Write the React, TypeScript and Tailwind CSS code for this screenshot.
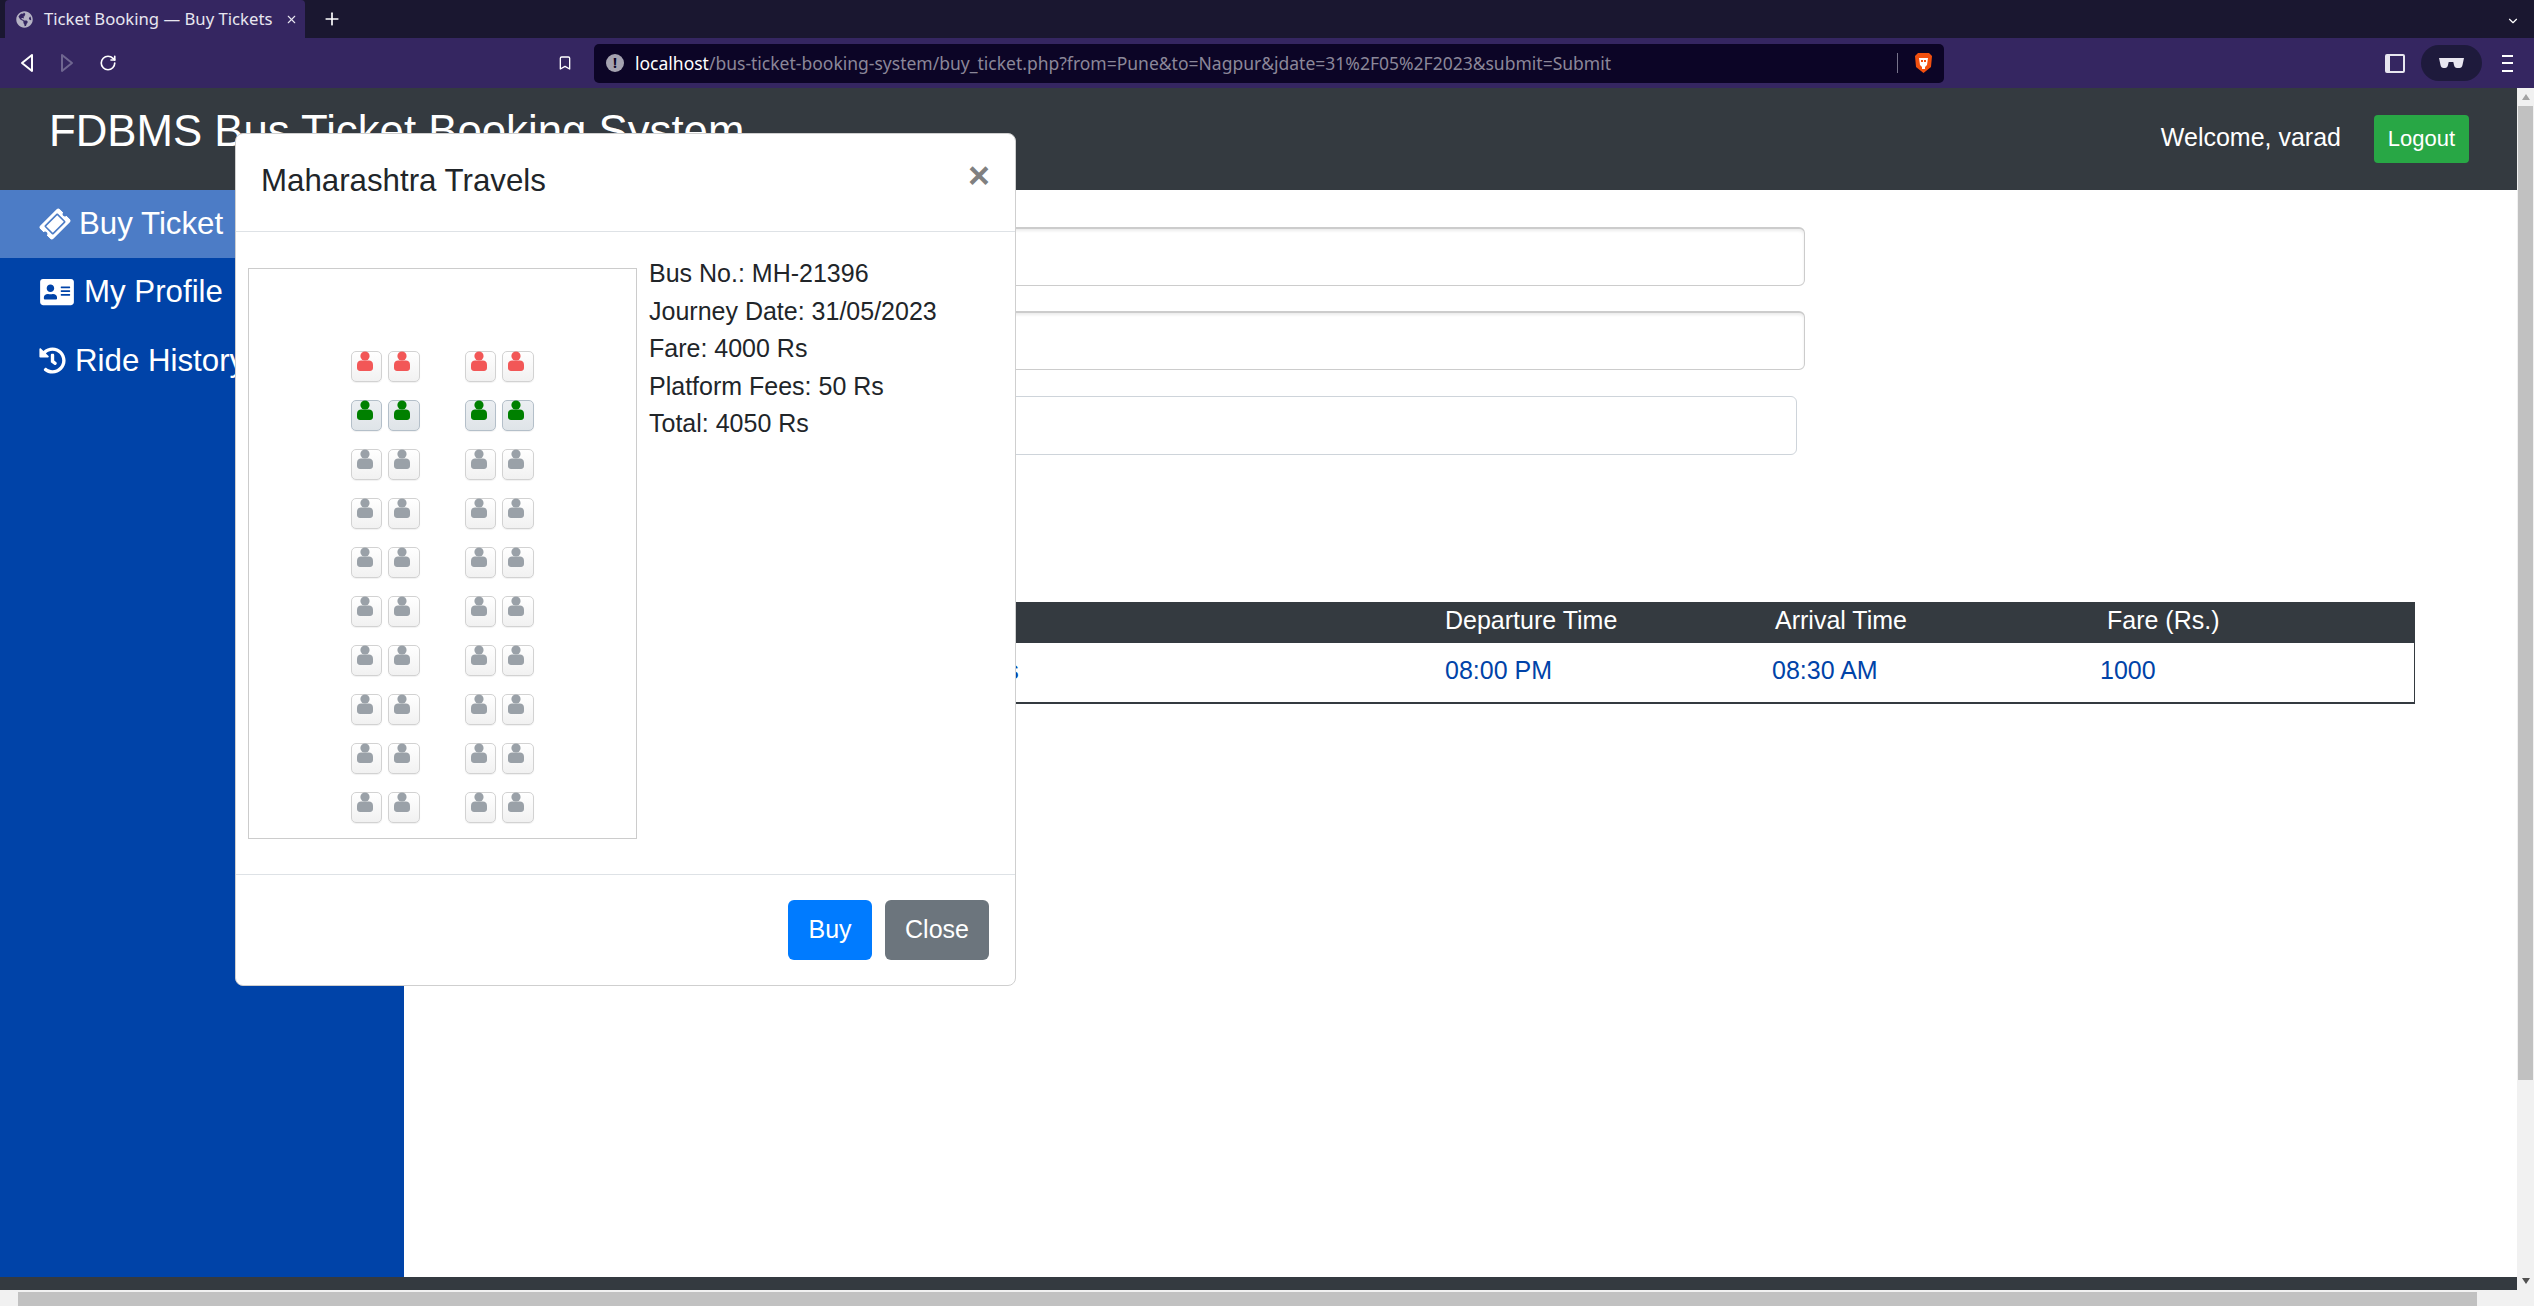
import { type FC } from "react";
import { Bookmark, ChevronDown, Plus, RotateCw, X } from "lucide-react";
import { FaAddressCard, FaGlobeAmericas, FaHistory, FaTicketAlt } from "react-icons/fa";

const Seat: FC<{ kind: "booked" | "selected" | "free"; wide?: boolean }> = ({ kind, wide }) => {
  const box =
    kind === "selected"
      ? "border-[#b4bfc9] bg-gradient-to-b from-[#eceff2] to-[#dfe4e8]"
      : "border-[#d2d2d2] bg-gradient-to-b from-white to-[#f1f1f1]";
  const fill = kind === "booked" ? "#f25757" : kind === "selected" ? "#008000" : "#9aa1a8";
  return (
    <div className={`relative h-[31px] rounded-[5px] border-[1.5px] shadow-[0_1px_1px_rgba(0,0,0,0.06)] ${box} ${wide ? "w-[32px]" : "w-[31px]"}`}>
      <svg className="absolute left-[4px] -top-[1px]" width="18" height="21" viewBox="0 0 18 21">
        <circle cx="9" cy="5" r="4.6" fill={fill} />
        <path d="M1 13.500C1 11 3 9.600 5 9.600h8c2 0 4 1.400 4 3.900V17c0 1.600-1.200 3-3 3H4c-1.800 0-3-1.400-3-3z" fill={fill} />
      </svg>
    </div>
  );
};

const seatRows: Array<"booked" | "selected" | "free"> = [
  "booked", "selected", "free", "free", "free", "free", "free", "free", "free", "free",
];

const BrowserChrome: FC = () => (
  <div className="shrink-0 font-['Noto_Sans',sans-serif]">
    <div className="flex h-[38px] items-end bg-[#1a1730] pl-[5px] pr-[14px] text-white">
      <div className="flex h-[38px] w-[300px] items-center rounded-t-[4px] bg-[#352661] pl-[11px]">
        <FaGlobeAmericas className="h-[17px] w-[17px] text-[#b5b2c4]" />
        <span className="ml-[11px] text-[16.700px] whitespace-nowrap text-[#e8e6f0]">Ticket Booking — Buy Tickets</span>
        <X className="ml-[13px] h-[13px] w-[13px] text-[#e8e6f0]" strokeWidth={2} />
      </div>
      <Plus className="mb-[9px] ml-[17px] h-[20px] w-[20px]" strokeWidth={2} />
      <ChevronDown className="mb-[10px] ml-auto h-[14px] w-[14px]" strokeWidth={2} />
    </div>
    <div className="flex h-[50px] items-center bg-[#352661] text-white">
      <svg className="ml-[20px] h-[20px] w-[14px]" viewBox="0 0 14 20" fill="none" stroke="#fff" strokeWidth="2" strokeLinejoin="round">
        <path d="M12 2 2 10l10 8z" />
      </svg>
      <svg className="ml-[26px] h-[20px] w-[14px]" viewBox="0 0 14 20" fill="none" stroke="#6f6690" strokeWidth="2" strokeLinejoin="round">
        <path d="M2 2l10 8-10 8z" />
      </svg>
      <RotateCw className="ml-[25px] h-[18px] w-[18px]" strokeWidth={2.2} />
      <Bookmark className="ml-[440px] h-[20px] w-[16px]" strokeWidth={2} />
      <div className="ml-[21px] flex h-[39px] w-[1350px] items-center rounded-[5px] bg-[#0c0526] pl-[12px]">
        <span className="flex h-[18px] w-[18px] items-center justify-center rounded-full bg-[#a5a3b0] text-[14px] leading-none font-bold text-[#0c0526]">!</span>
        <span className="ml-[11px] text-[17.500px] whitespace-nowrap text-[#8b8799]">
          <span className="text-white">localhost</span>/bus-ticket-booking-system/buy_ticket.php?from=Pune&amp;to=Nagpur&amp;jdate=31%2F05%2F2023&amp;submit=Submit
        </span>
        <div className="ml-auto h-[20px] w-px bg-[#77738a]" />
        <svg className="mr-[11px] ml-[16px] h-[22px] w-[19px]" viewBox="0 0 19 22">
          <path d="M4 1h11l3 3-1 11-7.500 6L2 15 1 4z" fill="#f2500f" />
          <path d="M5 6h9l-1 7-2 2v2H8v-2l-2-2z" fill="#fff" />
          <path d="M7 8h2v2H7zM10 8h2v2h-2z" fill="#f2500f" />
        </svg>
      </div>
      <div className="ml-[441px] h-[19px] w-[20px] rounded-[2px] border-2 border-l-[5px] border-[#e8e6f0] bg-[#352661]" />
      <div className="ml-[16px] flex h-[36px] w-[61px] items-center justify-center rounded-full bg-[#1e1a3c]">
        <svg className="h-[10px] w-[25px]" viewBox="0 0 25 10" fill="#e8e6f0">
          <path d="M0 0h25l-1.500 7c-.3 2-1.500 3-3 3h-2.500c-1.500 0-2.700-1-3-3l-.7-3h-4.600l-.7 3c-.3 2-1.500 3-3 3H4.500c-1.500 0-2.700-1-3-3z" />
        </svg>
      </div>
      <div className="ml-[20px] flex h-[17px] w-[11px] flex-col justify-between">
        <span className="h-[2px] bg-white" />
        <span className="h-[2px] bg-white" />
        <span className="h-[2px] bg-white" />
      </div>
    </div>
  </div>
);

const Sidebar: FC = () => (
  <aside className="w-[404px] shrink-0 bg-[#0043a8] text-[31.250px] leading-[36px] text-white">
    <div className="flex h-[68px] items-center bg-[#4c7cc6] pl-[41px]">
      <FaTicketAlt className="h-[28px] w-[28px] -rotate-45" />
      <span className="ml-[10px]">Buy Ticket</span>
    </div>
    <div className="flex h-[68px] items-center pl-[39px]">
      <FaAddressCard className="h-[30px] w-[36px]" />
      <span className="ml-[9px]">My Profile</span>
    </div>
    <div className="flex h-[69px] items-center pl-[39px]">
      <FaHistory className="h-[27px] w-[27px]" />
      <span className="ml-[9px]">Ride History</span>
    </div>
  </aside>
);

const BusModal: FC = () => (
  <div className="absolute top-[45px] left-[235px] z-10 flex h-[853px] w-[781px] flex-col rounded-[8px] border border-[#cfcfcf] bg-white text-[#212529]">
    <div className="relative h-[98px] shrink-0 border-b border-[#dee2e6] pt-[25px] pl-[25px] text-[31.250px] leading-[44px]">
      Maharashtra Travels
      <span className="absolute top-[19px] right-[25px] text-[37.500px] leading-[44px] font-bold text-[#808080]">×</span>
    </div>
    <div className="flex flex-1 pt-[36px] pl-[12px]">
      <div className="flex h-[571px] w-[389px] flex-col gap-[18px] border border-[#cccccc] pt-[82px] pl-[102px]">
        {seatRows.map((kind, i) => (
          <div key={i} className="flex">
            <Seat kind={kind} />
            <div className="ml-[6px]">
              <Seat kind={kind} wide />
            </div>
            <div className="ml-[45px]">
              <Seat kind={kind} />
            </div>
            <div className="ml-[6px]">
              <Seat kind={kind} wide />
            </div>
          </div>
        ))}
      </div>
      <div className="-mt-[13px] ml-[12px] text-[25px] leading-[37.500px]">
        <div>Bus No.: MH-21396</div>
        <div>Journey Date: 31/05/2023</div>
        <div>Fare: 4000 Rs</div>
        <div>Platform Fees: 50 Rs</div>
        <div>Total: 4050 Rs</div>
      </div>
    </div>
    <div className="flex h-[111px] shrink-0 items-start justify-end gap-[13px] border-t border-[#dee2e6] pt-[25px] pr-[26px] text-[25px] text-white">
      <button className="h-[60px] w-[84px] rounded-[6px] bg-[#007bff]">Buy</button>
      <button className="h-[60px] w-[104px] rounded-[6px] bg-[#6c757d]">Close</button>
    </div>
  </div>
);

const App: FC = () => {
  return (
    <div className="flex h-screen w-full flex-col overflow-hidden bg-white font-['Liberation_Sans',Arial,sans-serif]">
      <BrowserChrome />
      <div className="flex min-h-0 flex-1">
        <div className="relative flex min-w-0 flex-1 flex-col">
          {/* Navbar */}
          <header className="flex h-[102px] shrink-0 items-center bg-[#343a40] pr-[48px] pl-[49px] text-white">
            <h1 className="-mt-[16px] text-[43.750px] leading-[54px] whitespace-nowrap">FDBMS Bus Ticket Booking System</h1>
            <span className="-mt-[2px] ml-auto text-[25px]">Welcome, varad</span>
            <button className="ml-[33px] h-[48px] w-[95px] rounded-[4px] bg-[#28a745] pb-[2px] text-[22px]">Logout</button>
          </header>

          <div className="flex min-h-0 flex-1">
            <Sidebar />
            <main className="min-w-0 flex-1 pt-[37px] pl-[46px]">
              <div className="h-[59px] w-[1355px] rounded-[6px] border border-t-2 border-[#cccccc] shadow-[inset_0_2px_3px_rgba(0,0,0,0.08)]" />
              <div className="mt-[25px] h-[59px] w-[1355px] rounded-[6px] border border-t-2 border-[#cccccc] shadow-[inset_0_2px_3px_rgba(0,0,0,0.08)]" />
              <div className="mt-[26px] h-[59px] w-[1347px] rounded-[6px] border border-[#ced4da]" />
              <div className="mt-[147px] w-[1965px] border-r border-b-2 border-[#343a40] text-[25px]">
                <div className="grid h-[41px] grid-cols-[995px_330px_332px_1fr] items-center bg-[#343a40] pb-[3px] text-white">
                  <span className="pl-[341px]">Bus Name</span>
                  <span>Departure Time</span>
                  <span>Arrival Time</span>
                  <span>Fare (Rs.)</span>
                </div>
                <div className="grid h-[59px] grid-cols-[995px_327px_328px_1fr] items-center pb-[4px] text-[#0043a8]">
                  <span className="pl-[341px]">Maharashtra Travels</span>
                  <span>08:00 PM</span>
                  <span>08:30 AM</span>
                  <span>1000</span>
                </div>
              </div>
            </main>
          </div>

          <div className="h-[13px] shrink-0 bg-[#343a40]" />
          <BusModal />

          {/* Horizontal scrollbar */}
          <div className="flex h-[16px] shrink-0 items-end bg-[#f1f1f1] pl-[18px]">
            <div className="h-[14px] w-[2459px] bg-[#c1c1c1]" />
          </div>
        </div>

        {/* Vertical scrollbar */}
        <div className="flex w-[17px] shrink-0 flex-col items-center bg-[#f1f1f1]">
          <div className="mt-[6px] h-0 w-0 border-x-[4px] border-b-[6px] border-x-transparent border-b-[#a3a3a3]" />
          <div className="mt-[6px] h-[974px] w-[15px] bg-[#c1c1c1]" />
          <div className="mt-auto mb-[22px] h-0 w-0 border-x-[4px] border-t-[6px] border-x-transparent border-t-[#505050]" />
        </div>
      </div>
    </div>
  );
};

export default App;
